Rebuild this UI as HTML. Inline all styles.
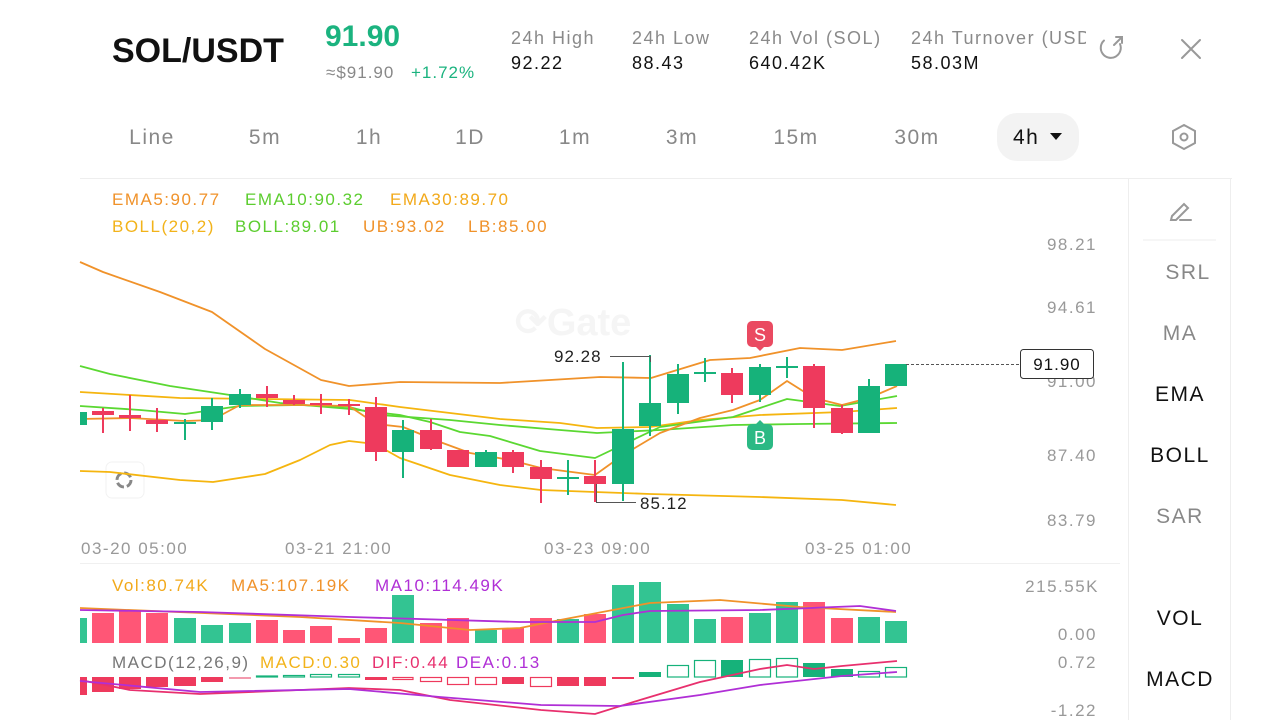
<!DOCTYPE html>
<html><head><meta charset="utf-8"><style>
html,body{margin:0;padding:0;background:#fff;width:1280px;height:720px;overflow:hidden}
svg{display:block;font-family:"Liberation Sans",sans-serif;letter-spacing:1.5px}
</style></head><body>
<svg width="1280" height="720" viewBox="0 0 1280 720">
<!-- header -->
<text x="112" y="62" font-size="34" font-weight="bold" fill="#111" letter-spacing="0">SOL/USDT</text>
<text x="325" y="46" font-size="30" font-weight="bold" fill="#1bb37f" letter-spacing="0">91.90</text>
<text x="326" y="78" font-size="17" fill="#888" letter-spacing="1">≈$91.90</text>
<text x="411" y="78" font-size="17" fill="#1bb37f" letter-spacing="1">+1.72%</text>
<g font-size="18" fill="#8a8a8a">
<text x="511" y="44">24h  High</text><text x="632" y="44">24h  Low</text><text x="749" y="44">24h  Vol (SOL)</text><text x="911" y="44">24h  Turnover (USD</text>
</g>
<rect x="1086" y="20" width="20" height="40" fill="#fff"/>
<g font-size="18" fill="#111">
<text x="511" y="69">92.22</text><text x="632" y="69">88.43</text><text x="749" y="69">640.42K</text><text x="911" y="69">58.03M</text>
</g>
<g stroke="#999" stroke-width="2" fill="none" stroke-linecap="round">
<path d="M1120 44 A10 10 0 1 1 1104 40.5"/>
<path d="M1114 45 L1122 37 M1116 37 H1122 V43"/>
<path d="M1182 40 L1200 58 M1200 40 L1182 58"/>
<path d="M1184 125 L1195 131 V143 L1184 149 L1173 143 V131 Z"/>
<circle cx="1184" cy="137" r="3.5"/>
<path d="M1172 216 L1184 204 L1188 208 L1176 220 H1171 Z M1180 220 H1191"/>
</g>
<!-- tabs -->
<g font-size="21" fill="#888" text-anchor="middle">
<text x="152" y="144">Line</text><text x="265" y="144">5m</text><text x="369" y="144">1h</text><text x="470" y="144">1D</text><text x="575" y="144">1m</text><text x="682" y="144">3m</text><text x="796" y="144">15m</text><text x="917" y="144">30m</text>
</g>
<rect x="997" y="113" width="82" height="48" rx="20" fill="#f3f3f3"/>
<text x="1013" y="144" font-size="21" fill="#111">4h</text>
<path d="M1050 133 H1062 L1056 140 Z" fill="#111"/>
<!-- separators -->
<line x1="80" y1="178.5" x2="1232" y2="178.5" stroke="#eee"/>
<line x1="1128.5" y1="178" x2="1128.5" y2="720" stroke="#eee"/>
<line x1="1230.5" y1="178" x2="1230.5" y2="720" stroke="#eee"/>
<line x1="1143" y1="240" x2="1216" y2="240" stroke="#eee"/>
<line x1="80" y1="563.5" x2="1120" y2="563.5" stroke="#f0f0f0"/>
<!-- right menu -->
<g font-size="21" text-anchor="middle">
<text x="1188" y="279" fill="#888">SRL</text><text x="1180" y="340" fill="#888">MA</text>
<text x="1180" y="401" fill="#111">EMA</text><text x="1180" y="462" fill="#111">BOLL</text>
<text x="1180" y="523" fill="#888">SAR</text>
<text x="1180" y="625" fill="#111">VOL</text><text x="1180" y="686" fill="#111">MACD</text>
</g>
<!-- legends -->
<g font-size="17">
<text x="112" y="205" fill="#f0922a">EMA5:90.77</text><text x="245" y="205" fill="#5ccd2f">EMA10:90.32</text><text x="390" y="205" fill="#f2a91a">EMA30:89.70</text>
<text x="112" y="232" fill="#f2b31a">BOLL(20,2)</text><text x="235" y="232" fill="#5ccd2f">BOLL:89.01</text><text x="363" y="232" fill="#f0922a">UB:93.02</text><text x="468" y="232" fill="#f0922a">LB:85.00</text>
<text x="112" y="591" fill="#f2a91a">Vol:80.74K</text><text x="231" y="591" fill="#f0922a">MA5:107.19K</text><text x="375" y="591" fill="#b02fd6">MA10:114.49K</text>
<text x="112" y="668" fill="#777">MACD(12,26,9)</text><text x="260" y="668" fill="#f2b31a">MACD:0.30</text><text x="372" y="668" fill="#e8306e">DIF:0.44</text><text x="456" y="668" fill="#b02fd6">DEA:0.13</text>
</g>
<!-- axis -->
<g font-size="17" fill="#999" text-anchor="end">
<text x="1097" y="250">98.21</text><text x="1097" y="313">94.61</text><text x="1097" y="387">91.00</text><text x="1097" y="461">87.40</text><text x="1097" y="526">83.79</text>
<text x="1099" y="592">215.55K</text><text x="1097" y="640">0.00</text><text x="1097" y="668">0.72</text><text x="1097" y="716">-1.22</text>
</g>
<g font-size="17" fill="#999">
<text x="81" y="554">03-20 05:00</text><text x="285" y="554">03-21 21:00</text><text x="544" y="554">03-23 09:00</text><text x="805" y="554">03-25 01:00</text>
</g>
<!-- watermark -->
<text x="515" y="335" font-size="38" font-weight="bold" fill="#f5f5f5" letter-spacing="0">⟳Gate</text>
<rect x="106" y="462" width="38" height="36" rx="6" fill="#fff" stroke="#f2f2f2"/>
<circle cx="124" cy="480" r="7" fill="none" stroke="#888" stroke-width="3" stroke-dasharray="8 3"/>
<!-- boll & ema lines -->
<g fill="none" stroke-width="1.8" stroke-linejoin="round">
<polyline stroke="#f0922a" points="80,262 103,272 160,292 212,312 265,349 321,380 349,386 400,382 500,383 600,377 651,378 710,360 750,358 800,348 842,350 896,341"/>
<polyline stroke="#f5b50f" points="80,392 180,398 350,400 400,407 500,419 560,423 597,428 650,427 700,420 760,415 842,412 897,408"/>
<polyline stroke="#f5b50f" points="80,471 110,472 180,480 213,482 265,474 300,460 330,445 349,441 375,444 400,458 450,475 500,485 541,490 595,492 650,494 760,497 842,500 896,505"/>
<polyline stroke="#5bd832" points="80,366 110,374 170,386 230,395 280,403 350,409 400,415 430,422 460,432 490,436 540,451 595,458 660,427 733,417 787,399 840,406 897,396"/>
<polyline stroke="#5bd832" points="80,406 140,410 185,414 240,406 300,405 349,407 380,415 450,420 500,425 560,430 597,433 660,430 733,425 800,424 897,423"/>
<polyline stroke="#f0922a" points="80,419 130,418 185,421 212,420 240,405 300,405 349,406 376,424 403,427 440,442 470,453 510,460 541,468 595,475 623,455 660,433 700,418 733,410 760,400 787,381 814,398 842,405 869,398 897,386"/>
</g>
<!-- candles -->
<g stroke-width="2">
<rect x="80" y="412" width="7" height="13" fill="#16b27a"/>
<g stroke="#ee3a5d" fill="#ee3a5d">
<line x1="103" y1="408" x2="103" y2="433"/><rect x="92" y="411" width="22" height="4" stroke="none"/>
<line x1="130" y1="395" x2="130" y2="431"/><rect x="119" y="415" width="22" height="3" stroke="none"/>
<line x1="157" y1="408" x2="157" y2="432"/><rect x="146" y="420" width="22" height="4" stroke="none"/>
<line x1="267" y1="386" x2="267" y2="407"/><rect x="256" y="394" width="22" height="4" stroke="none"/>
<line x1="294" y1="395" x2="294" y2="405"/><rect x="283" y="400" width="22" height="4" stroke="none"/>
<line x1="321" y1="394" x2="321" y2="414"/><rect x="310" y="403" width="22" height="2" stroke="none"/>
<line x1="349" y1="399" x2="349" y2="415"/><rect x="338" y="404" width="22" height="2" stroke="none"/>
<line x1="376" y1="397" x2="376" y2="461"/><rect x="365" y="407" width="22" height="45" stroke="none"/>
<line x1="431" y1="419" x2="431" y2="450"/><rect x="420" y="430" width="22" height="19" stroke="none"/>
<rect x="447" y="450" width="22" height="17" stroke="none"/>
<line x1="513" y1="450" x2="513" y2="473"/><rect x="502" y="452" width="22" height="15" stroke="none"/>
<line x1="541" y1="460" x2="541" y2="503"/><rect x="530" y="467" width="22" height="12" stroke="none"/>
<line x1="595" y1="460" x2="595" y2="502"/><rect x="584" y="476" width="22" height="8" stroke="none"/>
<line x1="732" y1="368" x2="732" y2="403"/><rect x="721" y="373" width="22" height="22" stroke="none"/>
<line x1="814" y1="364" x2="814" y2="428"/><rect x="803" y="366" width="22" height="42" stroke="none"/>
<line x1="842" y1="405" x2="842" y2="434"/><rect x="831" y="408" width="22" height="25" stroke="none"/>
</g>
<g stroke="#16b27a" fill="#16b27a">
<line x1="185" y1="419" x2="185" y2="440"/><rect x="174" y="422" width="22" height="2" stroke="none"/>
<line x1="212" y1="398" x2="212" y2="430"/><rect x="201" y="406" width="22" height="16" stroke="none"/>
<line x1="240" y1="389" x2="240" y2="408"/><rect x="229" y="394" width="22" height="11" stroke="none"/>
<line x1="403" y1="420" x2="403" y2="478"/><rect x="392" y="430" width="22" height="22" stroke="none"/>
<line x1="486" y1="450" x2="486" y2="467"/><rect x="475" y="452" width="22" height="15" stroke="none"/>
<line x1="568" y1="460" x2="568" y2="495"/><rect x="557" y="477" width="22" height="2" stroke="none"/>
<line x1="623" y1="362" x2="623" y2="501"/><rect x="612" y="429" width="22" height="55" stroke="none"/>
<line x1="650" y1="355" x2="650" y2="436"/><rect x="639" y="403" width="22" height="23" stroke="none"/>
<line x1="678" y1="364" x2="678" y2="414"/><rect x="667" y="374" width="22" height="29" stroke="none"/>
<line x1="705" y1="358" x2="705" y2="382"/><rect x="694" y="372" width="22" height="2" stroke="none"/>
<line x1="760" y1="364" x2="760" y2="402"/><rect x="749" y="367" width="22" height="28" stroke="none"/>
<line x1="787" y1="357" x2="787" y2="378"/><rect x="776" y="366" width="22" height="2" stroke="none"/>
<line x1="869" y1="379" x2="869" y2="433"/><rect x="858" y="386" width="22" height="47" stroke="none"/>
<rect x="885" y="364" width="22" height="22" stroke="none"/>
</g>
</g>
<!-- high/low marks -->
<g stroke="#555" stroke-width="1" fill="none"><path d="M610 356.5 H650.5 V362"/><path d="M596.5 484 V502.5 H636"/></g>
<text x="554" y="362" font-size="17" fill="#222" letter-spacing="1">92.28</text>
<text x="640" y="509" font-size="17" fill="#222" letter-spacing="1">85.12</text>
<!-- S / B -->
<rect x="747" y="321" width="26" height="26" rx="5" fill="#ea4a61"/><path d="M756 347 L760 351 L764 347Z" fill="#ea4a61"/>
<text x="760" y="341" font-size="18" fill="#fff" text-anchor="middle" letter-spacing="0">S</text>
<rect x="747" y="424" width="26" height="26" rx="5" fill="#2bb984"/><path d="M756 424 L760 420 L764 424Z" fill="#2bb984"/>
<text x="760" y="444" font-size="18" fill="#fff" text-anchor="middle" letter-spacing="0">B</text>
<!-- price line -->
<line x1="906" y1="364.5" x2="1020" y2="364.5" stroke="#555" stroke-dasharray="3 2"/>
<rect x="1020.5" y="349.5" width="73" height="29" rx="3" fill="#fff" stroke="#333"/>
<text x="1057" y="370" font-size="17" fill="#111" text-anchor="middle" letter-spacing="1">91.90</text>
<!-- volume -->
<g fill="#ff5676">
<rect x="92" y="613" width="22" height="30"/><rect x="119" y="610" width="22" height="33"/><rect x="146" y="613" width="22" height="30"/>
<rect x="256" y="620" width="22" height="23"/><rect x="283" y="630" width="22" height="13"/><rect x="310" y="626" width="22" height="17"/><rect x="338" y="638" width="22" height="5"/><rect x="365" y="628" width="22" height="15"/>
<rect x="420" y="623" width="22" height="20"/><rect x="447" y="618" width="22" height="25"/><rect x="502" y="628" width="22" height="15"/><rect x="530" y="618" width="22" height="25"/><rect x="584" y="614" width="22" height="29"/>
<rect x="721" y="617" width="22" height="26"/><rect x="803" y="602" width="22" height="41"/><rect x="831" y="618" width="22" height="25"/>
</g>
<g fill="#33c492">
<rect x="80" y="618" width="7" height="25"/><rect x="174" y="618" width="22" height="25"/><rect x="201" y="625" width="22" height="18"/><rect x="229" y="623" width="22" height="20"/>
<rect x="392" y="595" width="22" height="48"/><rect x="475" y="630" width="22" height="13"/><rect x="557" y="619" width="22" height="24"/>
<rect x="612" y="585" width="22" height="58"/><rect x="639" y="582" width="22" height="61"/><rect x="667" y="604" width="22" height="39"/><rect x="694" y="619" width="22" height="24"/>
<rect x="749" y="613" width="22" height="30"/><rect x="776" y="602" width="22" height="41"/><rect x="858" y="617" width="22" height="26"/><rect x="885" y="621" width="22" height="22"/>
</g>
<g fill="none" stroke-width="1.8">
<polyline stroke="#f0922a" points="80,608 300,617 400,623 470,630 520,628 560,620 650,603 720,600 800,607 896,612"/>
<polyline stroke="#b02fd6" points="80,610 200,612 350,617 520,622 595,622 623,615 650,611 760,610 860,606 896,611"/>
</g>
<!-- macd -->
<g fill="#ee3a5d">
<rect x="80" y="677" width="7" height="18"/><rect x="92" y="677" width="22" height="15"/><rect x="119" y="677" width="22" height="12"/><rect x="146" y="677" width="22" height="10"/><rect x="174" y="677" width="22" height="9"/><rect x="201" y="677" width="22" height="5"/><rect x="229" y="677" width="22" height="2" fill="#f39aae"/>
<rect x="365" y="677" width="22" height="3"/><rect x="502" y="677" width="22" height="7"/><rect x="557" y="677" width="22" height="9"/><rect x="584" y="677" width="22" height="9"/><rect x="612" y="677" width="22" height="2"/>
</g>
<g fill="none" stroke="#ee3a5d" stroke-width="1.2">
<rect x="393" y="677.5" width="20" height="2"/><rect x="420.5" y="677.5" width="21" height="4"/><rect x="447.5" y="677.5" width="21" height="7"/><rect x="475.5" y="677.5" width="21" height="7"/><rect x="530.5" y="677.5" width="21" height="9"/>
</g>
<g fill="none" stroke="#16b27a" stroke-width="1.2">
<rect x="256.5" y="676" width="21" height="1"/><rect x="283.5" y="675.5" width="21" height="1.5"/><rect x="310.5" y="674.5" width="21" height="2.5"/><rect x="338.5" y="674.5" width="21" height="2.5"/>
<rect x="667.5" y="665.5" width="21" height="11.5"/><rect x="694.5" y="660.5" width="21" height="16.5"/><rect x="749.5" y="659.5" width="21" height="17.5"/><rect x="776.5" y="658.5" width="21" height="18.5"/><rect x="858.5" y="671.5" width="21" height="5.5"/><rect x="885.5" y="667.5" width="21" height="9.5"/>
</g>
<g fill="#16b27a">
<rect x="639" y="672" width="22" height="5"/><rect x="721" y="660" width="22" height="17"/><rect x="803" y="663" width="22" height="14"/><rect x="831" y="669" width="22" height="8"/>
</g>
<g fill="none" stroke-width="1.8">
<polyline stroke="#e8306e" points="80,680 130,690 200,694 300,690 349,688 400,690 450,700 541,710 595,714 640,700 700,682 760,669 787,665 814,669 842,666 897,661"/>
<polyline stroke="#b02fd6" points="80,681 200,692 349,689 440,697 541,705 620,706 700,695 760,685 842,676 897,672"/>
</g>
</svg>
</body></html>
